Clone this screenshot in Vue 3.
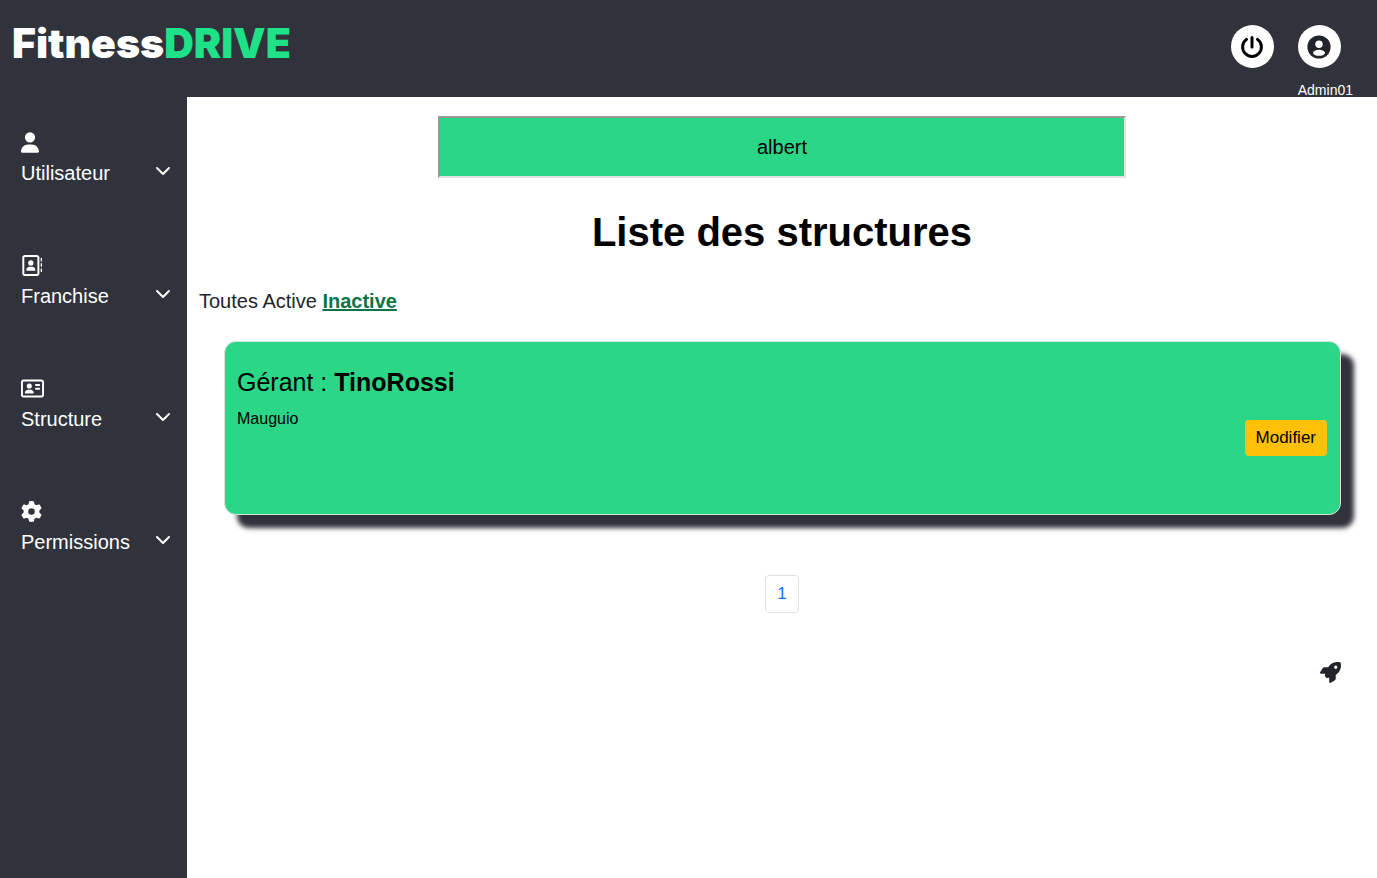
<script setup>
import { ref } from 'vue'

const search = ref('albert')

const menu = [
  {
    label: 'Utilisateur',
    viewBox: '0 0 448 512',
    width: 18,
    path: 'M224 256A128 128 0 1 0 224 0a128 128 0 1 0 0 256zm-45.7 48C79.8 304 0 383.8 0 482.3C0 498.7 13.3 512 29.7 512H418.3c16.4 0 29.7-13.3 29.7-29.7C448 383.8 368.2 304 269.7 304H178.3z',
  },
  {
    label: 'Franchise',
    viewBox: '0 0 512 512',
    width: 21,
    path: 'M384 48c8.8 0 16 7.2 16 16V448c0 8.8-7.2 16-16 16H96c-8.8 0-16-7.2-16-16V64c0-8.8 7.2-16 16-16H384zM96 0C60.7 0 32 28.7 32 64V448c0 35.3 28.7 64 64 64H384c35.3 0 64-28.7 64-64V64c0-35.3-28.7-64-64-64H96zM240 256a64 64 0 1 0 0-128 64 64 0 1 0 0 128zm-32 32c-44.2 0-80 35.8-80 80c0 8.8 7.2 16 16 16H336c8.8 0 16-7.2 16-16c0-44.2-35.8-80-80-80H208zM512 80c0-8.8-7.2-16-16-16s-16 7.2-16 16v64c0 8.8 7.2 16 16 16s16-7.2 16-16V80zM496 192c-8.8 0-16 7.2-16 16v64c0 8.8 7.2 16 16 16s16-7.2 16-16V208c0-8.8-7.2-16-16-16zm16 144c0-8.8-7.2-16-16-16s-16 7.2-16 16v64c0 8.8 7.2 16 16 16s16-7.2 16-16V336z',
  },
  {
    label: 'Structure',
    viewBox: '0 0 576 512',
    width: 23,
    path: 'M512 80c8.8 0 16 7.2 16 16V416c0 8.8-7.2 16-16 16H64c-8.8 0-16-7.2-16-16V96c0-8.8 7.2-16 16-16H512zM64 32C28.7 32 0 60.7 0 96V416c0 35.3 28.7 64 64 64H512c35.3 0 64-28.7 64-64V96c0-35.3-28.7-64-64-64H64zM208 256a64 64 0 1 0 0-128 64 64 0 1 0 0 128zm-32 32c-44.2 0-80 35.8-80 80c0 8.8 7.2 16 16 16H304c8.8 0 16-7.2 16-16c0-44.2-35.8-80-80-80H176zM376 144c-13.3 0-24 10.7-24 24s10.7 24 24 24h80c13.3 0 24-10.7 24-24s-10.7-24-24-24H376zm0 96c-13.3 0-24 10.7-24 24s10.7 24 24 24h80c13.3 0 24-10.7 24-24s-10.7-24-24-24H376z',
  },
  {
    label: 'Permissions',
    viewBox: '0 0 512 512',
    width: 21,
    path: 'M495.9 166.6c3.2 8.7 .5 18.4-6.4 24.6l-43.3 39.4c1.1 8.3 1.7 16.8 1.7 25.4s-.6 17.1-1.7 25.4l43.3 39.4c6.9 6.2 9.6 15.9 6.4 24.6c-4.4 11.9-9.7 23.3-15.8 34.3l-4.7 8.1c-6.6 11-14 21.4-22.1 31.2c-5.9 7.2-15.7 9.6-24.5 6.8l-55.7-17.7c-13.4 10.3-28.2 18.9-44 25.4l-12.5 57.1c-2 9.1-9 16.3-18.2 17.8c-13.8 2.3-28 3.5-42.5 3.5s-28.7-1.2-42.5-3.5c-9.2-1.5-16.2-8.7-18.2-17.8l-12.5-57.1c-15.8-6.5-30.6-15.1-44-25.4L83.1 425.9c-8.8 2.8-18.6 .3-24.5-6.8c-8.1-9.8-15.5-20.2-22.1-31.2l-4.7-8.1c-6.1-11-11.4-22.4-15.8-34.3c-3.2-8.7-.5-18.4 6.4-24.6l43.3-39.4C64.6 273.1 64 264.6 64 256s.6-17.1 1.7-25.4L22.4 191.2c-6.9-6.2-9.6-15.9-6.4-24.6c4.4-11.9 9.7-23.3 15.8-34.3l4.7-8.1c6.6-11 14-21.4 22.1-31.2c5.9-7.2 15.7-9.6 24.5-6.8l55.7 17.7c13.4-10.3 28.2-18.9 44-25.4l12.5-57.1c2-9.1 9-16.3 18.2-17.8C227.3 1.2 241.5 0 256 0s28.7 1.2 42.5 3.5c9.2 1.5 16.2 8.7 18.2 17.8l12.5 57.1c15.8 6.5 30.6 15.1 44 25.4l55.7-17.7c8.8-2.8 18.6-.3 24.5 6.8c8.1 9.8 15.5 20.2 22.1 31.2l4.7 8.1c6.1 11 11.4 22.4 15.8 34.3zM256 336a80 80 0 1 0 0-160 80 80 0 1 0 0 160z',
  },
]

const structures = [{ manager: 'TinoRossi', city: 'Mauguio' }]
</script>

<template>
  <div class="page">
    <header class="topbar">
      <a class="brand" href="#">Fitness<span class="accent">DRIVE</span></a>
      <div class="actions">
        <button class="round" type="button" aria-label="Déconnexion">
          <svg width="26" height="26" viewBox="0 0 26 26" fill="none" stroke="#000" stroke-width="3" stroke-linecap="round">
            <path d="M7.5 5.4a9.4 9.4 0 1 0 11 0M13 3.5V13" />
          </svg>
        </button>
        <div class="account">
          <button class="round" type="button" aria-label="Profil">
            <svg width="24" height="24" viewBox="0 0 24 24">
              <circle cx="12" cy="12" r="11.6" fill="#212529" />
              <circle cx="12" cy="9.3" r="3.7" fill="#fff" />
              <ellipse cx="12" cy="17.8" rx="6" ry="3" fill="#fff" />
            </svg>
          </button>
          <span class="user">Admin01</span>
        </div>
      </div>
    </header>

    <div class="body">
      <nav class="sidebar">
        <button v-for="item in menu" :key="item.label" class="item" type="button">
          <svg class="glyph" :width="item.width" height="21" :viewBox="item.viewBox" fill="#fff">
            <path :d="item.path" />
          </svg>
          <span class="row">
            <span>{{ item.label }}</span>
            <svg width="16" height="10" viewBox="0 0 16 10" fill="none" stroke="#fff" stroke-width="2" stroke-linecap="round" stroke-linejoin="round">
              <path d="M2 2l6 6 6-6" />
            </svg>
          </span>
        </button>
      </nav>

      <main class="content">
        <input v-model="search" class="search" type="text" aria-label="Rechercher" />
        <h1>Liste des structures</h1>
        <div class="filters">
          <a href="#">Toutes</a> <a href="#">Active</a> <a class="current" href="#">Inactive</a>
        </div>

        <article v-for="s in structures" :key="s.manager" class="card">
          <h2>Gérant : <strong>{{ s.manager }}</strong></h2>
          <p>{{ s.city }}</p>
          <button class="edit" type="button">Modifier</button>
        </article>

        <div class="pagination"><a href="#">1</a></div>

        <a class="to-top" href="#" aria-label="Haut de page">
          <svg width="21" height="21" viewBox="0 0 512 512" fill="#212529">
            <path d="M156.6 384.9L125.7 354c-8.5-8.5-11.5-20.8-7.7-32.2c3-8.9 7-20.5 11.8-33.8L24 288c-8.6 0-16.6-4.6-20.9-12.1s-4.2-16.7 .2-24.1l52.5-88.5c13-21.9 36.5-35.3 61.9-35.3l82.3 0c2.4-4 4.8-7.7 7.2-11.3C289.1-4.1 411.1-8.1 483.9 5.3c11.6 2.1 20.6 11.2 22.8 22.8c13.4 72.9 9.3 194.8-111.4 276.7c-3.5 2.4-7.3 4.8-11.3 7.2v82.3c0 25.4-13.4 49-35.3 61.9l-88.5 52.5c-7.4 4.4-16.6 4.5-24.1 .2s-12.1-12.2-12.1-20.9V380.8c-14.1 4.9-26.4 8.9-35.7 11.9c-11.2 3.6-23.4 .5-31.8-7.8zM384 168a40 40 0 1 0 0-80 40 40 0 1 0 0 80z" />
          </svg>
        </a>
      </main>
    </div>
  </div>
</template>

<style>
body {
  margin: 0;
  background: #fff;
}
</style>

<style scoped>
.page {
  display: flex;
  flex-direction: column;
  min-height: 100vh;
  font-family: "Liberation Sans", Arial, sans-serif;
  font-size: 20px;
  line-height: 30px;
  color: #212529;
}
.page * {
  box-sizing: border-box;
}
button {
  border: 0;
  padding: 0;
  font: inherit;
  color: inherit;
  cursor: pointer;
}
a {
  color: inherit;
  text-decoration: none;
}
svg {
  display: block;
}
.topbar {
  display: flex;
  justify-content: space-between;
  align-items: flex-start;
  height: 97px;
  padding: 0 24px 0 12px;
  background: #30333c;
}
.brand {
  margin-top: 19px;
  font-family: "Arial Black", Inter, sans-serif;
  font-size: 41px;
  font-weight: 900;
  line-height: 48px;
  color: #fff;
}
.accent {
  color: #1fe187;
}
.actions {
  display: flex;
  gap: 24px;
  padding-top: 25px;
}
.round {
  display: flex;
  align-items: center;
  justify-content: center;
  width: 43px;
  height: 43px;
  border-radius: 50%;
  background: #fff;
}
.account {
  display: flex;
  flex-direction: column;
  gap: 12px;
}
.user {
  font-size: 14px;
  line-height: 20px;
  color: #fff;
}
.body {
  display: flex;
  flex: 1;
}
.sidebar {
  display: flex;
  flex-direction: column;
  flex: none;
  gap: 67px;
  width: 187px;
  padding: 35px 16px 0 21px;
  background: #30333c;
}
.item {
  display: flex;
  flex-direction: column;
  gap: 5px;
  background: none;
  color: #fff;
}
.row {
  display: flex;
  align-items: center;
  justify-content: space-between;
  width: 100%;
}
.row svg {
  margin-bottom: 5px;
}
.content {
  display: flex;
  flex-direction: column;
  flex: 1;
  min-width: 0;
  padding: 19px 12px;
}
.search {
  align-self: center;
  width: 59%;
  height: 62px;
  border: 2px solid;
  border-color: #999 #e3e3e3 #e3e3e3 #999;
  background: #2bd687;
  font: inherit;
  color: #000;
  text-align: center;
}
h1 {
  margin: 30px 0 0;
  font-size: 40px;
  line-height: 48px;
  text-align: center;
  color: #000;
}
.filters {
  margin-top: 30px;
}
.current {
  font-weight: 700;
  color: #0e7448;
  text-decoration: underline;
  text-decoration-thickness: 2px;
  text-decoration-skip-ink: none;
}
.card {
  display: flex;
  flex-direction: column;
  min-height: 174px;
  margin: 25px 24px 0 25px;
  padding: 24px 13px 12px 12px;
  border: 1px solid #d4e6dd;
  border-radius: 12px;
  background: #2bd687;
  box-shadow: 13px 13px 5px #30333c;
  color: #000;
}
h2 {
  margin: 0;
  font-size: 25px;
  font-weight: 400;
  line-height: 32px;
}
.card p {
  margin: 9px 0 0;
  font-size: 16px;
  line-height: 24px;
}
.edit {
  align-self: flex-end;
  margin-top: -11px;
  padding: 6px 11px;
  border-radius: 4px;
  background: #ffc107;
  font-size: 17px;
  line-height: 24px;
}
.pagination {
  display: flex;
  justify-content: center;
  margin-top: 60px;
}
.pagination a {
  padding: 6px 11px;
  border: 1px solid #dee2e6;
  border-radius: 4px;
  font-size: 17px;
  line-height: 24px;
  color: #0d6efd;
}
.to-top {
  align-self: flex-end;
  margin: 49px 24px 0 0;
}
</style>
